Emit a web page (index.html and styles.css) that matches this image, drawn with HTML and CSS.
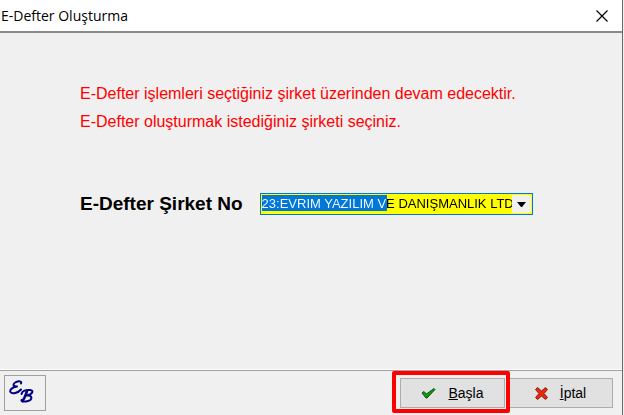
FILE: index.html
```html
<!DOCTYPE html>
<html lang="tr">

<head>
    <meta charset="utf-8">
    <title>E-Defter Oluşturma</title>
    <link rel="stylesheet" href="styles.css">
</head>

<body>
    <div class="window">
        <!-- Title bar -->
        <header class="titlebar">
            <h1>E-Defter Oluşturma</h1>
            <button type="button" class="close-btn" aria-label="Kapat">
                <svg width="12" height="12" viewBox="0 0 12 12">
                    <path d="M0.5 0.5 L11.5 11.5 M11.5 0.5 L0.5 11.5" stroke="#000" stroke-width="1.2" fill="none"/>
                </svg>
            </button>
        </header>

        <!-- Company selection -->
        <main class="content">
            <p class="info">E-Defter işlemleri seçtiğiniz şirket üzerinden devam edecektir.</p>
            <p class="info">E-Defter oluşturmak istediğiniz şirketi seçiniz.</p>

            <div class="company">
                <label for="company-no">E-Defter Şirket No</label>
                <div class="combo">
                    <select id="company-no" name="company-no">
                        <option>23:EVRIM YAZILIM VE DANIŞMANLIK LTD</option>
                    </select>
                    <span class="arrow">
                        <svg width="9" height="5" viewBox="0 0 9 5">
                            <path d="M0 0 H9 L5 5 H4 Z" fill="#000"/>
                        </svg>
                    </span>
                </div>
            </div>
        </main>

        <!-- Bottom bar -->
        <footer class="footer">
            <button type="button" class="logo-btn" aria-label="EB">
                <svg width="26" height="24" viewBox="0 0 26 24" fill="none" stroke="#000080" stroke-width="2" stroke-linecap="round" stroke-linejoin="round">
                    <path d="M12 3.500 C13 1 10 0.800 7 2 C3.500 4 3.500 6.500 8 6.500 C3 7 0.500 10 1.500 12 C3 14.500 9 13 12 9.500"/>
                    <path d="M18 11 C17 14 16 18 13.500 21" stroke-width="2.600"/>
                    <path d="M12.500 14 C13 11 17 9.500 21 10 C25.500 10.500 23.500 14.500 17.500 15.500 C24 15 23.500 20 19 21 C15 22 12 21.500 12.500 20"/>
                </svg>
            </button>
            <div class="actions">
                <button type="button" class="action-btn highlight">
                    <svg width="15" height="11" viewBox="0 0 15 11">
                        <path d="M1 5 L3 3.500 L5.500 6 L13 0.500 L14 1.500 L6 10 L5 10 Z" fill="#159a15" stroke="#075507" stroke-width="1"/>
                    </svg>
                    <span><u>B</u>aşla</span>
                </button>
                <button type="button" class="action-btn">
                    <svg width="13" height="13" viewBox="0 0 13 13">
                        <path d="M2.500 0.500 L6.500 4 L10.500 0.500 L12.500 2.500 L9 6.500 L12.500 10.500 L10.500 12.500 L6.500 9 L2.500 12.500 L0.500 10.500 L4 6.500 L0.500 2.500 Z" fill="#e82a10" stroke="#8c1608" stroke-width="1"/>
                    </svg>
                    <span><u>İ</u>ptal</span>
                </button>
            </div>
        </footer>
    </div>
</body>

</html>
```

FILE: styles.css
```css
body {
    font-family: "Liberation Sans", Arial, sans-serif;
    background-color: #f0f0f0;
    margin: 0;
    padding: 0;
}

.window {
    display: flex;
    flex-direction: column;
    box-sizing: border-box;
    min-height: 100vh;
    margin-right: 1px;
    border-right: 1px solid #696969;
    background-color: #f0f0f0;
}

button {
    font-family: inherit;
    cursor: pointer;
}

.titlebar {
    display: flex;
    justify-content: space-between;
    align-items: center;
    height: 31px;
    background-color: #fff;
    border-bottom: 2px solid #8a8a8a;
}

.titlebar h1 {
    margin: 0;
    padding-left: 1px;
    font-family: "Open Sans", "Segoe UI", sans-serif;
    font-size: 14px;
    font-weight: normal;
}

.close-btn {
    display: flex;
    padding: 8px 14px;
    background: none;
    border: none;
}

.content {
    flex-grow: 1;
    padding: 47px 80px 0;
    border-bottom: 1px solid #fff;
}

.info {
    margin: 0;
    color: #ff0000;
    font-size: 16px;
    line-height: 28px;
}

.company {
    display: flex;
    align-items: center;
    gap: 17px;
    margin-top: 56px;
}

.company label {
    font-size: 19px;
    font-weight: bold;
    line-height: 24px;
    white-space: nowrap;
}

.combo {
    position: relative;
    flex: 0 1 273px;
}

.combo select {
    appearance: none;
    display: block;
    box-sizing: border-box;
    width: 100%;
    height: 22px;
    padding: 0 0 2px 1px;
    border: 1px solid #0078d7;
    border-radius: 0;
    outline: none;
    font-family: inherit;
    font-size: 13px;
    color: transparent;
    /* selected part of the text, then the box itself */
    background:
        linear-gradient(to right, #fff 126px, #000 126px) text,
        linear-gradient(#0078d7, #0078d7) 1px 1px / 125px 16px no-repeat,
        #ffff00;
}

/* drop-down arrow over the end of the text */
.arrow {
    position: absolute;
    top: 2px;
    right: 2px;
    bottom: 2px;
    display: flex;
    align-items: center;
    justify-content: center;
    width: 19px;
    background-color: #f0f0f0;
    pointer-events: none;
}

.footer {
    display: flex;
    justify-content: space-between;
    align-items: center;
    height: 44px;
    padding: 0 9px 0 4px;
    border-top: 1px solid #a0a0a0;
}

.logo-btn {
    display: flex;
    box-sizing: border-box;
    width: 42px;
    height: 36px;
    padding: 4px;
    background-color: #f0f0f0;
    border: 1px solid #a0a0a0;
}

.actions {
    display: flex;
    align-items: center;
    gap: 3px;
}

.action-btn {
    display: flex;
    align-items: center;
    justify-content: center;
    gap: 12px;
    box-sizing: border-box;
    width: 105px;
    height: 30px;
    padding: 0;
    background-color: #e1e1e1;
    border: 1px solid #adadad;
    color: #000;
    font-size: 14px;
}

.highlight {
    position: relative;
    z-index: 1;
}

/* red frame round the start button */
.highlight::after {
    content: "";
    position: absolute;
    inset: -8px -6px -6px -9px;
    border: 4px solid #ff0000;
    border-radius: 2px;
}
```
